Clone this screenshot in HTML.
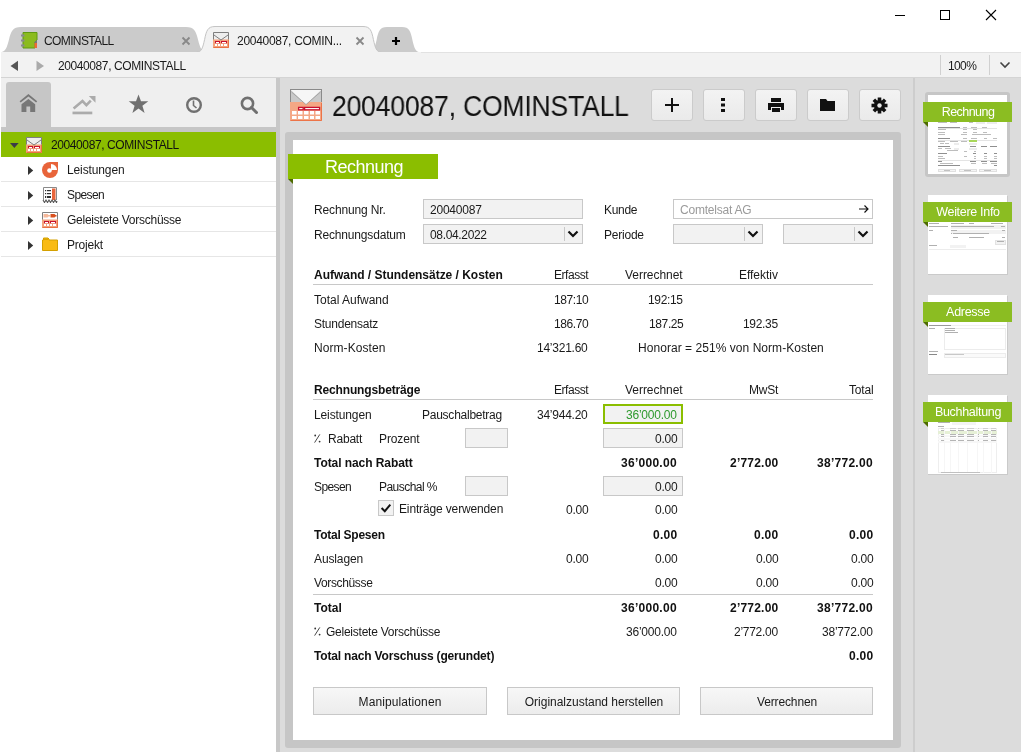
<!DOCTYPE html>
<html><head><meta charset="utf-8"><style>
html,body{margin:0;padding:0;}
body{width:1022px;height:753px;position:relative;overflow:hidden;background:#fff;font-family:"Liberation Sans",sans-serif;}
.t{position:absolute;white-space:nowrap;line-height:1;will-change:transform;}
.r{position:absolute;}
</style></head><body>
<div class="r" style="left:895px;top:15px;width:10px;height:1px;background:#000;"></div>
<div class="r" style="left:940px;top:10px;width:10px;height:10px;background:transparent;border:1px solid #000;box-sizing:border-box;"></div>
<svg class="r" style="left:985px;top:9px;" width="12" height="12" viewBox="0 0 12 12"><path d="M1 1 L11 11 M11 1 L1 11" stroke="#000" stroke-width="1.1" fill="none"/></svg>
<svg class="r" style="left:0px;top:0px;" width="440" height="56" viewBox="0 0 440 56"><path d="M-1 52.5 C5.6 52.5 6.9 47.5 8.9 40 C11.1 31 12.6 27 21 27 L186 27 C194.4 27 195.9 31 198.1 40 C200.1 47.5 201.4 52.5 208 52.5 Z" fill="#cbcbcb"/><path d="M368 52.5 C373.7 52.5 374.8 47.5 376.6 40 C378.4 31 379.8 27 387 27 L402 27 C409.2 27 410.6 31 412.4 40 C414.2 47.5 415.3 52.5 421 52.5 Z" fill="#cbcbcb"/><path d="M196 52.5 C201.7 52.5 202.8 47.5 204.6 39.5 C206.4 30.5 207.8 26.5 215 26.5 L363 26.5 C370.2 26.5 371.6 30.5 373.4 39.5 C375.2 47.5 376.3 52.5 382 52.5 Z" fill="#f2f2f2"/><path d="M196 52.5 C201.7 52.5 202.8 47.5 204.6 39.5 C206.4 30.5 207.8 26.5 215 26.5 L363 26.5 C370.2 26.5 371.6 30.5 373.4 39.5 C375.2 47.5 376.3 52.5 382 52.5" fill="none" stroke="#c4c4c4" stroke-width="1"/></svg>
<div class="r" style="left:0px;top:52px;width:1022px;height:25px;background:#f2f2f2;"></div>
<div class="r" style="left:0px;top:77px;width:1022px;height:1px;background:#d4d4d4;"></div>
<div class="r" style="left:421px;top:52px;width:600px;height:1px;background:#e2e2e2;"></div>
<div class="r" style="left:1021px;top:52px;width:1px;height:26px;background:#fff;"></div>
<div class="r" style="left:0px;top:52px;width:1px;height:26px;background:#fff;"></div>
<svg class="r" style="left:213px;top:32px;" width="16" height="16" viewBox="0 0 16 16"><rect x="0" y="7" width="16" height="9" fill="#f3a27c"/><path d="M0.5 15.5 H15.5 V7.5" stroke="#ea7042" stroke-width="1" fill="none"/><path d="M0.5 7.5 V0.5 H15.5 V7.5" stroke="#7f7f7f" stroke-width="1" fill="#eeeeee"/><path d="M1 3 L8 8 L15 3" stroke="#7f7f7f" stroke-width="1" fill="none"/><rect x="2" y="9" width="5" height="2.2" fill="#c8102e"/><rect x="3" y="10" width="3" height="1.2" fill="#fff"/><rect x="8" y="9" width="6" height="2.2" fill="#c8102e"/><rect x="9" y="10" width="4" height="1.2" fill="#fff"/><g fill="#fff"><rect x="2" y="12" width="2" height="2"/><rect x="5" y="12" width="2" height="2"/><rect x="8" y="12" width="2" height="2"/><rect x="11" y="12" width="3" height="2"/></g></svg>
<svg class="r" style="left:20px;top:31px;" width="19" height="18" viewBox="0 0 19 18"><path d="M3 1.5 H17 V9 L15 11 V17 H3 Z" fill="#8bbb1e" stroke="#5f9a10" stroke-width="1"/><path d="M14.5 11 L17 9 V12 H14.5 Z" fill="#777"/><rect x="14.5" y="12" width="2.5" height="5" fill="#ee6a36"/><g fill="#8a8a90"><rect x="1" y="3.5" width="3.5" height="2"/><rect x="1" y="8.5" width="3.5" height="2"/><rect x="1" y="13.5" width="3.5" height="2"/></g></svg>
<div class="t" style="top:35px;font-size:12px;font-weight:normal;color:#1a1a1a;letter-spacing:-0.621px;left:44px;">COMINSTALL</div>
<div class="t" style="top:35px;font-size:12px;font-weight:normal;color:#1a1a1a;letter-spacing:-0.292px;left:237px;">20040087, COMIN...</div>
<svg class="r" style="left:181px;top:36px;" width="10" height="10" viewBox="0 0 10 10"><path d="M1.5 1.5 L8.5 8.5 M8.5 1.5 L1.5 8.5" stroke="#888" stroke-width="1.8" fill="none"/></svg>
<svg class="r" style="left:355px;top:36px;" width="10" height="10" viewBox="0 0 10 10"><path d="M1.5 1.5 L8.5 8.5 M8.5 1.5 L1.5 8.5" stroke="#888" stroke-width="1.8" fill="none"/></svg>
<svg class="r" style="left:391px;top:36px;" width="10" height="10" viewBox="0 0 10 10"><path d="M5 1 V9 M1 5 H9" stroke="#000" stroke-width="2.2" fill="none"/></svg>
<svg class="r" style="left:9px;top:60px;" width="11" height="12" viewBox="0 0 11 12"><path d="M9 0.8 L9 11 L1.5 5.9 Z" fill="#555"/></svg>
<svg class="r" style="left:35px;top:60px;" width="11" height="12" viewBox="0 0 11 12"><path d="M1.5 0.8 L1.5 11 L9 5.9 Z" fill="#aaa"/></svg>
<div class="t" style="top:60px;font-size:12px;font-weight:normal;color:#1a1a1a;letter-spacing:-0.408px;left:58px;">20040087, COMINSTALL</div>
<div class="r" style="left:940px;top:55px;width:1px;height:20px;background:#d0d0d0;"></div>
<div class="r" style="left:989px;top:55px;width:1px;height:20px;background:#d0d0d0;"></div>
<div class="t" style="top:60px;font-size:12px;font-weight:normal;color:#1a1a1a;letter-spacing:-0.63px;left:948px;">100%</div>
<svg class="r" style="left:999px;top:61px;" width="12" height="8" viewBox="0 0 12 8"><path d="M1.5 1.5 L6 6 L10.5 1.5" stroke="#444" stroke-width="1.6" fill="none"/></svg>
<div class="r" style="left:1px;top:78px;width:275px;height:49px;background:#efefef;"></div>
<div class="r" style="left:6px;top:82px;width:45px;height:45px;background:#c6c6c6;border-radius:3px 3px 0 0;"></div>
<div class="r" style="left:1px;top:127px;width:275px;height:5px;background:#c6c6c6;"></div>
<svg class="r" style="left:16px;top:90px;" width="26" height="26" viewBox="0 0 26 26"><path d="M3.6 11.2 L12.4 4.1 L21.2 11.2 L20.1 12.6 L12.4 6.4 L4.7 12.6 Z" fill="#777"/><path d="M5.5 14.2 L12.4 8.9 L19.2 14.2 V22.1 H14.2 V16.6 H10.4 V22.1 H5.5 Z" fill="#777"/></svg>
<svg class="r" style="left:68px;top:90px;" width="30" height="28" viewBox="0 0 30 28"><path d="M5.6 18.6 L14.5 11.1 L18.4 15.1 L22.8 10.6" stroke="#ababab" stroke-width="2.6" fill="none"/><path d="M20.8 6.1 H27.5 V12.8 Z" fill="#ababab"/><rect x="4.5" y="21.6" width="19.8" height="2.7" fill="#ababab"/></svg>
<svg class="r" style="left:128px;top:94px;" width="21" height="20" viewBox="0 0 21 20"><path d="M10.5 0.5 L13 7.3 L20.3 7.3 L14.4 11.7 L16.6 19 L10.5 14.5 L4.4 19 L6.6 11.7 L0.7 7.3 L8 7.3 Z" fill="#707070"/></svg>
<svg class="r" style="left:185px;top:96px;" width="18" height="18" viewBox="0 0 18 18"><circle cx="9" cy="9" r="6.8" stroke="#707070" stroke-width="2.4" fill="none"/><path d="M8.5 4.5 V9.5 L11.5 12" stroke="#707070" stroke-width="1.6" fill="none"/></svg>
<svg class="r" style="left:240px;top:96px;" width="19" height="19" viewBox="0 0 19 19"><circle cx="7.5" cy="7.5" r="5.6" stroke="#707070" stroke-width="2.6" fill="none"/><path d="M11.5 11.5 L16.5 16.5" stroke="#707070" stroke-width="3" stroke-linecap="round" fill="none"/></svg>
<div class="r" style="left:1px;top:132px;width:275px;height:25px;background:#8bbe00;"></div>
<svg class="r" style="left:10px;top:143px;" width="9" height="6" viewBox="0 0 9 6"><path d="M0 0 H8.7 L4.35 5 Z" fill="#3c3c46"/></svg>
<svg class="r" style="left:26px;top:137px;" width="16" height="16" viewBox="0 0 16 16"><rect x="0" y="7" width="16" height="9" fill="#f3a27c"/><path d="M0.5 15.5 H15.5 V7.5" stroke="#ea7042" stroke-width="1" fill="none"/><path d="M0.5 7.5 V0.5 H15.5 V7.5" stroke="#7f7f7f" stroke-width="1" fill="#eeeeee"/><path d="M1 3 L8 8 L15 3" stroke="#7f7f7f" stroke-width="1" fill="none"/><rect x="2" y="9" width="5" height="2.2" fill="#c8102e"/><rect x="3" y="10" width="3" height="1.2" fill="#fff"/><rect x="8" y="9" width="6" height="2.2" fill="#c8102e"/><rect x="9" y="10" width="4" height="1.2" fill="#fff"/><g fill="#fff"><rect x="2" y="12" width="2" height="2"/><rect x="5" y="12" width="2" height="2"/><rect x="8" y="12" width="2" height="2"/><rect x="11" y="12" width="3" height="2"/></g></svg>
<div class="t" style="top:139px;font-size:12px;font-weight:normal;color:#111;letter-spacing:-0.4px;left:51px;">20040087, COMINSTALL</div>
<svg class="r" style="left:28px;top:166px;" width="6" height="10" viewBox="0 0 6 10"><path d="M0 0 V9 L5.2 4.5 Z" fill="#333"/></svg>
<div class="r" style="left:1px;top:181px;width:275px;height:1px;background:#e6e6e6;"></div>
<div class="t" style="top:164px;font-size:12px;font-weight:normal;color:#1a1a1a;letter-spacing:-0.124px;left:67px;">Leistungen</div>
<svg class="r" style="left:28px;top:191px;" width="6" height="10" viewBox="0 0 6 10"><path d="M0 0 V9 L5.2 4.5 Z" fill="#333"/></svg>
<div class="r" style="left:1px;top:206px;width:275px;height:1px;background:#e6e6e6;"></div>
<div class="t" style="top:189px;font-size:12px;font-weight:normal;color:#1a1a1a;letter-spacing:-0.6px;left:67px;">Spesen</div>
<svg class="r" style="left:28px;top:216px;" width="6" height="10" viewBox="0 0 6 10"><path d="M0 0 V9 L5.2 4.5 Z" fill="#333"/></svg>
<div class="r" style="left:1px;top:231px;width:275px;height:1px;background:#e6e6e6;"></div>
<div class="t" style="top:214px;font-size:12px;font-weight:normal;color:#1a1a1a;letter-spacing:-0.245px;left:67px;">Geleistete Vorschüsse</div>
<svg class="r" style="left:28px;top:241px;" width="6" height="10" viewBox="0 0 6 10"><path d="M0 0 V9 L5.2 4.5 Z" fill="#333"/></svg>
<div class="r" style="left:1px;top:256px;width:275px;height:1px;background:#e6e6e6;"></div>
<div class="t" style="top:239px;font-size:12px;font-weight:normal;color:#1a1a1a;letter-spacing:-0.2px;left:67px;">Projekt</div>
<svg class="r" style="left:42px;top:162px;" width="16" height="16" viewBox="0 0 16 16"><path d="M8 0 H16 V8 A8 8 0 1 1 8 0 Z" fill="#e8643a"/><path d="M9 8 V2 A6 6 0 0 1 15 8 Z" fill="#fff"/><circle cx="7.5" cy="8.5" r="2.3" fill="#fff"/></svg>
<svg class="r" style="left:42px;top:187px;" width="16" height="16" viewBox="0 0 16 16"><path d="M1.5 0.5 H14.5 V13" stroke="#8a8a8a" fill="#fff"/><path d="M1.5 0.5 V13" stroke="#8a8a8a"/><rect x="2" y="1" width="12" height="12" fill="#fff"/><rect x="10" y="1.5" width="3.5" height="11.5" fill="#e8643a"/><g fill="#333"><rect x="3" y="3" width="1.2" height="1.2"/><rect x="5" y="3" width="4" height="1.2"/><rect x="3" y="6" width="1.2" height="1.2"/><rect x="5" y="6" width="4" height="1.2"/><rect x="3" y="9" width="1.2" height="2"/><rect x="5" y="9" width="4" height="2"/></g><path d="M1 13 L2.5 15.5 L4 13 L5.5 15.5 L7 13 L8.5 15.5 L10 13 L11.5 15.5 L13 13 L14.5 15.5 L15 14" stroke="#555" stroke-width="1.1" fill="none"/></svg>
<svg class="r" style="left:42px;top:212px;" width="16" height="16" viewBox="0 0 16 16"><rect x="0" y="7" width="16" height="9" fill="#f3a27c"/><path d="M0.5 15.5 H15.5 V7.5" stroke="#ea7042" fill="none"/><path d="M0.5 7.5 V0.5 H15.5 V7.5" stroke="#7f7f7f" fill="#fff"/><path d="M1.5 2 H5.5 L6.5 3 H8 V4.5 H6.5 L5.5 5.5 H1.5 Z" fill="#f5b89a"/><path d="M8.5 2 H12.5 L13.5 3 H14.5 V4.5 H13.5 L12.5 5.5 H8.5 Z" fill="#d9501e"/><rect x="2" y="9" width="5" height="2.2" fill="#c8102e"/><rect x="3" y="10" width="3" height="1.2" fill="#fff"/><rect x="8" y="9" width="6" height="2.2" fill="#c8102e"/><rect x="9" y="10" width="4" height="1.2" fill="#fff"/><g fill="#fff"><rect x="2" y="12" width="2" height="2"/><rect x="5" y="12" width="2" height="2"/><rect x="8" y="12" width="2" height="2"/><rect x="11" y="12" width="3" height="2"/></g></svg>
<svg class="r" style="left:42px;top:237px;" width="16" height="16" viewBox="0 0 16 16"><path d="M1.5 1 H6 L7 2 V3 H15.5 V13.5 H0.5 V3 H1.5 Z" fill="#f9bb14" stroke="#d4a000" stroke-width="1"/><rect x="2" y="1.5" width="4" height="1.5" fill="#dca600"/></svg>
<div class="r" style="left:276px;top:78px;width:4px;height:675px;background:#c8c8c8;"></div>
<div class="r" style="left:280px;top:78px;width:633px;height:675px;background:#dcdcdc;"></div>
<div class="r" style="left:913px;top:78px;width:2px;height:675px;background:#cdcdcd;"></div>
<div class="r" style="left:915px;top:78px;width:106px;height:675px;background:#dcdcdc;"></div>
<div class="r" style="left:1021px;top:78px;width:1px;height:675px;background:#fff;"></div>
<svg class="r" style="left:290px;top:89px;" width="32" height="32" viewBox="0 0 32 32"><rect x="0" y="13" width="32" height="19" fill="#f4a785"/><path d="M0.5 31.5 H31.5 V13" stroke="#ec7448" stroke-width="1" fill="none"/><rect x="0.5" y="0.5" width="31" height="13" fill="#c9c9c9" stroke="#8a8a8a" stroke-width="1"/><rect x="0" y="13" width="32" height="1" fill="#f4a785"/><path d="M1 1 H31 L16 15.5 Z" fill="#f6f6f6"/><path d="M1.5 3 L16 15.5 L30.5 3" stroke="#9a9a9a" stroke-width="0.8" fill="none"/><path d="M1 1 H31 L16 14.5 Z" fill="#f6f6f6"/><rect x="8.6" y="18.4" width="4.6" height="2.4" fill="#fff" stroke="#c8102e" stroke-width="1.3"/><rect x="14.6" y="18.4" width="15" height="2.4" fill="#fff" stroke="#c8102e" stroke-width="1.3"/><g fill="#fff"><rect x="2" y="22" width="4.6" height="3.5"/><rect x="8" y="22" width="4.5" height="3.5"/><rect x="14" y="22" width="4.5" height="3.5"/><rect x="20" y="22" width="4" height="3.5"/><rect x="25.5" y="22" width="4.5" height="3.5"/><rect x="2" y="27" width="4.6" height="3"/><rect x="8" y="27" width="4.5" height="3"/><rect x="14" y="27" width="4.5" height="3"/><rect x="20" y="27" width="4" height="3"/><rect x="25.5" y="27" width="4.5" height="3"/></g></svg>
<div class="t" style="top:92px;font-size:29px;font-weight:normal;color:#111;letter-spacing:-0.2px;left:332px;transform:scaleX(0.915);transform-origin:0 0;">20040087, COMINSTALL</div>
<div class="r" style="left:651px;top:89px;width:42px;height:32px;background:linear-gradient(#f3f3f3,#eaeaea);border:1px solid #cbcbcb;box-sizing:border-box;border-radius:3px;"></div>
<div class="r" style="left:703px;top:89px;width:42px;height:32px;background:linear-gradient(#f3f3f3,#eaeaea);border:1px solid #cbcbcb;box-sizing:border-box;border-radius:3px;"></div>
<div class="r" style="left:755px;top:89px;width:42px;height:32px;background:linear-gradient(#f3f3f3,#eaeaea);border:1px solid #cbcbcb;box-sizing:border-box;border-radius:3px;"></div>
<div class="r" style="left:807px;top:89px;width:42px;height:32px;background:linear-gradient(#f3f3f3,#eaeaea);border:1px solid #cbcbcb;box-sizing:border-box;border-radius:3px;"></div>
<div class="r" style="left:859px;top:89px;width:42px;height:32px;background:linear-gradient(#f3f3f3,#eaeaea);border:1px solid #cbcbcb;box-sizing:border-box;border-radius:3px;"></div>
<svg class="r" style="left:664px;top:97px;" width="16" height="16" viewBox="0 0 16 16"><path d="M8 1 V15 M1 8 H15" stroke="#111" stroke-width="2" fill="none"/></svg>
<svg class="r" style="left:719px;top:97px;" width="8" height="16" viewBox="0 0 8 16"><rect x="2" y="1" width="4" height="3" fill="#111"/><rect x="2" y="6.5" width="4" height="3" fill="#111"/><rect x="2" y="12" width="4" height="3" fill="#111"/></svg>
<svg class="r" style="left:767px;top:97px;" width="18" height="16" viewBox="0 0 18 16"><rect x="4" y="1" width="10" height="4" fill="#111"/><path d="M1 6 H17 V13 H14 V10 H4 V13 H1 Z" fill="#111"/><rect x="5" y="11" width="8" height="4" fill="#111"/></svg>
<svg class="r" style="left:819px;top:97px;" width="17" height="15" viewBox="0 0 17 15"><path d="M1 2 H7 L8.5 4 H16 V14 H1 Z" fill="#111"/></svg>
<svg class="r" style="left:871px;top:97px;" width="17" height="17" viewBox="0 0 17 17"><g transform="translate(8.5 8.5)"><circle r="5.5" fill="#111"/><g fill="#111"><rect x="-1.8" y="-8" width="3.6" height="16"/><rect x="-1.8" y="-8" width="3.6" height="16" transform="rotate(45)"/><rect x="-1.8" y="-8" width="3.6" height="16" transform="rotate(90)"/><rect x="-1.8" y="-8" width="3.6" height="16" transform="rotate(135)"/></g><circle r="2.2" fill="#e8e8e8"/></g></svg>
<div class="r" style="left:285px;top:132px;width:616px;height:616px;background:#c6c6c6;border-radius:3px;"></div>
<div class="r" style="left:293px;top:140px;width:600px;height:600px;background:#fff;"></div>
<div class="r" style="left:288px;top:154px;width:150px;height:25px;background:#8bbe00;"></div>
<svg class="r" style="left:288px;top:179px;" width="6" height="6" viewBox="0 0 6 6"><path d="M0 0 H5 V5 Z" fill="#4d6b00"/></svg>
<div class="t" style="top:158px;font-size:18px;font-weight:normal;color:#fff;letter-spacing:-0.5px;left:324.5px;">Rechnung</div>
<div class="t" style="top:204px;font-size:12px;font-weight:normal;color:#1a1a1a;letter-spacing:-0.143px;left:313.5px;">Rechnung Nr.</div>
<div class="r" style="left:423px;top:199px;width:160px;height:20px;background:#f2f2f2;border:1px solid #c8c8c8;box-sizing:border-box;"></div>
<div class="t" style="top:204px;font-size:12px;font-weight:normal;color:#1a1a1a;letter-spacing:-0.227px;left:429.5px;">20040087</div>
<div class="t" style="top:229px;font-size:12px;font-weight:normal;color:#1a1a1a;letter-spacing:-0.174px;left:313.5px;">Rechnungsdatum</div>
<div class="r" style="left:423px;top:224px;width:160px;height:20px;background:#f2f2f2;border:1px solid #c8c8c8;box-sizing:border-box;"></div>
<div class="r" style="left:564px;top:227px;width:1px;height:14px;background:#c8c8c8;"></div>
<div class="t" style="top:229px;font-size:12px;font-weight:normal;color:#1a1a1a;letter-spacing:-0.34px;left:429.5px;">08.04.2022</div>
<svg class="r" style="left:567px;top:230px;" width="12" height="8" viewBox="0 0 12 8"><path d="M1.5 1.5 L6 6 L10.5 1.5" stroke="#111" stroke-width="2.2" fill="none"/></svg>
<div class="t" style="top:204px;font-size:12px;font-weight:normal;color:#1a1a1a;letter-spacing:-0.325px;left:603.5px;">Kunde</div>
<div class="r" style="left:673px;top:199px;width:200px;height:20px;background:#fff;border:1px solid #c8c8c8;box-sizing:border-box;"></div>
<div class="t" style="top:204px;font-size:12px;font-weight:normal;color:#9a9a9a;letter-spacing:-0.226px;left:679.6px;">Comtelsat AG</div>
<svg class="r" style="left:858px;top:204px;" width="12" height="10" viewBox="0 0 12 10"><path d="M1 5 H10 M6.5 1.5 L10 5 L6.5 8.5" stroke="#111" stroke-width="1.15" fill="none"/></svg>
<div class="t" style="top:229px;font-size:12px;font-weight:normal;color:#1a1a1a;letter-spacing:-0.227px;left:603.5px;">Periode</div>
<div class="r" style="left:673px;top:224px;width:90px;height:20px;background:#f2f2f2;border:1px solid #c8c8c8;box-sizing:border-box;"></div>
<div class="r" style="left:744px;top:227px;width:1px;height:14px;background:#c8c8c8;"></div>
<svg class="r" style="left:747px;top:230px;" width="12" height="8" viewBox="0 0 12 8"><path d="M1.5 1.5 L6 6 L10.5 1.5" stroke="#111" stroke-width="2.2" fill="none"/></svg>
<div class="r" style="left:783px;top:224px;width:90px;height:20px;background:#f2f2f2;border:1px solid #c8c8c8;box-sizing:border-box;"></div>
<div class="r" style="left:854px;top:227px;width:1px;height:14px;background:#c8c8c8;"></div>
<svg class="r" style="left:857px;top:230px;" width="12" height="8" viewBox="0 0 12 8"><path d="M1.5 1.5 L6 6 L10.5 1.5" stroke="#111" stroke-width="2.2" fill="none"/></svg>
<div class="t" style="top:269px;font-size:12px;font-weight:bold;color:#111;letter-spacing:-0.018px;left:313.5px;">Aufwand / Stundensätze / Kosten</div>
<div class="t" style="top:269px;font-size:12px;font-weight:normal;color:#1a1a1a;letter-spacing:-0.457px;right:434px;">Erfasst</div>
<div class="t" style="top:269px;font-size:12px;font-weight:normal;color:#1a1a1a;letter-spacing:-0.037px;right:339px;">Verrechnet</div>
<div class="t" style="top:269px;font-size:12px;font-weight:normal;color:#1a1a1a;letter-spacing:-0.033px;right:244px;">Effektiv</div>
<div class="r" style="left:313px;top:284px;width:560px;height:1px;background:#c8c8c8;"></div>
<div class="t" style="top:294px;font-size:12px;font-weight:normal;color:#1a1a1a;letter-spacing:-0.007px;left:313.5px;">Total Aufwand</div>
<div class="t" style="top:294px;font-size:12px;font-weight:normal;color:#1a1a1a;letter-spacing:-0.421px;right:434px;">187:10</div>
<div class="t" style="top:294px;font-size:12px;font-weight:normal;color:#1a1a1a;letter-spacing:-0.361px;right:339px;">192:15</div>
<div class="t" style="top:318px;font-size:12px;font-weight:normal;color:#1a1a1a;letter-spacing:-0.241px;left:313.5px;">Stundensatz</div>
<div class="t" style="top:318px;font-size:12px;font-weight:normal;color:#1a1a1a;letter-spacing:-0.421px;right:434px;">186.70</div>
<div class="t" style="top:318px;font-size:12px;font-weight:normal;color:#1a1a1a;letter-spacing:-0.381px;right:339px;">187.25</div>
<div class="t" style="top:318px;font-size:12px;font-weight:normal;color:#1a1a1a;letter-spacing:-0.321px;right:244px;">192.35</div>
<div class="t" style="top:342px;font-size:12px;font-weight:normal;color:#1a1a1a;letter-spacing:0.071px;left:313.5px;">Norm-Kosten</div>
<div class="t" style="top:342px;font-size:12px;font-weight:normal;color:#1a1a1a;letter-spacing:-0.24px;right:434px;">14’321.60</div>
<div class="t" style="top:342px;font-size:12px;font-weight:normal;color:#1a1a1a;letter-spacing:0.047px;left:638.4px;">Honorar = 251% von Norm-Kosten</div>
<div class="t" style="top:384px;font-size:12px;font-weight:bold;color:#111;letter-spacing:-0.15px;left:313.5px;">Rechnungsbeträge</div>
<div class="t" style="top:384px;font-size:12px;font-weight:normal;color:#1a1a1a;letter-spacing:-0.457px;right:434px;">Erfasst</div>
<div class="t" style="top:384px;font-size:12px;font-weight:normal;color:#1a1a1a;letter-spacing:-0.037px;right:339px;">Verrechnet</div>
<div class="t" style="top:384px;font-size:12px;font-weight:normal;color:#1a1a1a;letter-spacing:-0.2px;right:244px;">MwSt</div>
<div class="t" style="top:384px;font-size:12px;font-weight:normal;color:#1a1a1a;letter-spacing:-0.187px;right:149px;">Total</div>
<div class="r" style="left:313px;top:399px;width:560px;height:1px;background:#c8c8c8;"></div>
<div class="t" style="top:409px;font-size:12px;font-weight:normal;color:#1a1a1a;letter-spacing:-0.124px;left:313.5px;">Leistungen</div>
<div class="t" style="top:409px;font-size:12px;font-weight:normal;color:#1a1a1a;letter-spacing:-0.245px;left:421.5px;">Pauschalbetrag</div>
<div class="t" style="top:409px;font-size:12px;font-weight:normal;color:#1a1a1a;letter-spacing:-0.24px;right:434px;">34’944.20</div>
<div class="r" style="left:603px;top:404px;width:80px;height:20px;background:#f2f2f2;border:2px solid #8bbe00;box-sizing:border-box;"></div>
<div class="t" style="top:409px;font-size:12px;font-weight:normal;color:#2e9a2e;letter-spacing:-0.227px;right:345px;">36’000.00</div>
<svg class="r" style="left:314px;top:434px;" width="7" height="9" viewBox="0 0 7 9"><circle cx="1.2" cy="1.5" r="0.9" fill="#333"/><circle cx="5.6" cy="7.6" r="0.9" fill="#333"/><path d="M0.6 8.6 L5.8 0.4" stroke="#333" stroke-width="0.9"/></svg>
<div class="t" style="top:433px;font-size:12px;font-weight:normal;color:#1a1a1a;letter-spacing:-0.211px;left:327.6px;">Rabatt</div>
<div class="t" style="top:433px;font-size:12px;font-weight:normal;color:#1a1a1a;letter-spacing:-0.109px;left:378.7px;">Prozent</div>
<div class="r" style="left:465px;top:428px;width:43px;height:20px;background:#f2f2f2;border:1px solid #c8c8c8;box-sizing:border-box;"></div>
<div class="r" style="left:603px;top:428px;width:80px;height:20px;background:#f2f2f2;border:1px solid #c8c8c8;box-sizing:border-box;"></div>
<div class="t" style="top:433px;font-size:12px;font-weight:normal;color:#1a1a1a;letter-spacing:-0.218px;right:345px;">0.00</div>
<div class="t" style="top:457px;font-size:12px;font-weight:bold;color:#111;letter-spacing:-0.062px;left:313.5px;">Total nach Rabatt</div>
<div class="t" style="top:457px;font-size:12px;font-weight:bold;color:#111;letter-spacing:0.277px;right:345px;">36’000.00</div>
<div class="t" style="top:457px;font-size:12px;font-weight:bold;color:#111;letter-spacing:0.213px;right:244px;">2’772.00</div>
<div class="t" style="top:457px;font-size:12px;font-weight:bold;color:#111;letter-spacing:0.277px;right:149px;">38’772.00</div>
<div class="t" style="top:481px;font-size:12px;font-weight:normal;color:#1a1a1a;letter-spacing:-0.6px;left:313.5px;">Spesen</div>
<div class="t" style="top:481px;font-size:12px;font-weight:normal;color:#1a1a1a;letter-spacing:-0.541px;left:378.7px;">Pauschal %</div>
<div class="r" style="left:465px;top:476px;width:43px;height:20px;background:#f2f2f2;border:1px solid #c8c8c8;box-sizing:border-box;"></div>
<div class="r" style="left:603px;top:476px;width:80px;height:20px;background:#f2f2f2;border:1px solid #c8c8c8;box-sizing:border-box;"></div>
<div class="t" style="top:481px;font-size:12px;font-weight:normal;color:#1a1a1a;letter-spacing:-0.218px;right:345px;">0.00</div>
<div class="r" style="left:378px;top:500px;width:16px;height:16px;background:#f2f2f2;border:1px solid #c8c8c8;box-sizing:border-box;"></div>
<svg class="r" style="left:379px;top:501px;" width="14" height="14" viewBox="0 0 14 14"><path d="M2.6 7 L5.8 10.2 L11.3 3.6" stroke="#111" stroke-width="2" fill="none"/></svg>
<div class="t" style="top:503px;font-size:12px;font-weight:normal;color:#1a1a1a;letter-spacing:-0.143px;left:399px;">Einträge verwenden</div>
<div class="t" style="top:504px;font-size:12px;font-weight:normal;color:#1a1a1a;letter-spacing:-0.218px;right:434px;">0.00</div>
<div class="t" style="top:504px;font-size:12px;font-weight:normal;color:#1a1a1a;letter-spacing:-0.218px;right:345px;">0.00</div>
<div class="t" style="top:529px;font-size:12px;font-weight:bold;color:#111;letter-spacing:-0.254px;left:313.5px;">Total Spesen</div>
<div class="t" style="top:529px;font-size:12px;font-weight:bold;color:#111;letter-spacing:0.248px;right:345px;">0.00</div>
<div class="t" style="top:529px;font-size:12px;font-weight:bold;color:#111;letter-spacing:0.248px;right:244px;">0.00</div>
<div class="t" style="top:529px;font-size:12px;font-weight:bold;color:#111;letter-spacing:0.248px;right:149px;">0.00</div>
<div class="t" style="top:553px;font-size:12px;font-weight:normal;color:#1a1a1a;letter-spacing:-0.12px;left:313.5px;">Auslagen</div>
<div class="t" style="top:553px;font-size:12px;font-weight:normal;color:#1a1a1a;letter-spacing:-0.218px;right:434px;">0.00</div>
<div class="t" style="top:553px;font-size:12px;font-weight:normal;color:#1a1a1a;letter-spacing:-0.218px;right:345px;">0.00</div>
<div class="t" style="top:553px;font-size:12px;font-weight:normal;color:#1a1a1a;letter-spacing:-0.218px;right:244px;">0.00</div>
<div class="t" style="top:553px;font-size:12px;font-weight:normal;color:#1a1a1a;letter-spacing:-0.218px;right:149px;">0.00</div>
<div class="t" style="top:577px;font-size:12px;font-weight:normal;color:#1a1a1a;letter-spacing:-0.359px;left:313.5px;">Vorschüsse</div>
<div class="t" style="top:577px;font-size:12px;font-weight:normal;color:#1a1a1a;letter-spacing:-0.218px;right:345px;">0.00</div>
<div class="t" style="top:577px;font-size:12px;font-weight:normal;color:#1a1a1a;letter-spacing:-0.218px;right:244px;">0.00</div>
<div class="t" style="top:577px;font-size:12px;font-weight:normal;color:#1a1a1a;letter-spacing:-0.218px;right:149px;">0.00</div>
<div class="r" style="left:313px;top:594px;width:560px;height:1px;background:#c8c8c8;"></div>
<div class="t" style="top:602px;font-size:12px;font-weight:bold;color:#111;letter-spacing:0.007px;left:313.5px;">Total</div>
<div class="t" style="top:602px;font-size:12px;font-weight:bold;color:#111;letter-spacing:0.277px;right:345px;">36’000.00</div>
<div class="t" style="top:602px;font-size:12px;font-weight:bold;color:#111;letter-spacing:0.213px;right:244px;">2’772.00</div>
<div class="t" style="top:602px;font-size:12px;font-weight:bold;color:#111;letter-spacing:0.277px;right:149px;">38’772.00</div>
<svg class="r" style="left:314px;top:627px;" width="7" height="9" viewBox="0 0 7 9"><circle cx="1.2" cy="1.5" r="0.9" fill="#333"/><circle cx="5.6" cy="7.6" r="0.9" fill="#333"/><path d="M0.6 8.6 L5.8 0.4" stroke="#333" stroke-width="0.9"/></svg>
<div class="t" style="top:626px;font-size:12px;font-weight:normal;color:#1a1a1a;letter-spacing:-0.245px;left:326px;">Geleistete Vorschüsse</div>
<div class="t" style="top:626px;font-size:12px;font-weight:normal;color:#1a1a1a;letter-spacing:-0.227px;right:345px;">36’000.00</div>
<div class="t" style="top:626px;font-size:12px;font-weight:normal;color:#1a1a1a;letter-spacing:-0.278px;right:244px;">2’772.00</div>
<div class="t" style="top:626px;font-size:12px;font-weight:normal;color:#1a1a1a;letter-spacing:-0.227px;right:149px;">38’772.00</div>
<div class="t" style="top:650px;font-size:12px;font-weight:bold;color:#111;letter-spacing:-0.173px;left:313.5px;">Total nach Vorschuss (gerundet)</div>
<div class="t" style="top:650px;font-size:12px;font-weight:bold;color:#111;letter-spacing:0.248px;right:149px;">0.00</div>
<div class="r" style="left:313px;top:687px;width:174px;height:28px;background:linear-gradient(#f7f7f7,#ececec);border:1px solid #c8c8c8;box-sizing:border-box;"></div>
<div class="t" style="top:696px;font-size:12px;font-weight:normal;color:#1a1a1a;letter-spacing:0.108px;left:100.0px;width:600px;text-align:center;">Manipulationen</div>
<div class="r" style="left:507px;top:687px;width:173px;height:28px;background:linear-gradient(#f7f7f7,#ececec);border:1px solid #c8c8c8;box-sizing:border-box;"></div>
<div class="t" style="top:696px;font-size:12px;font-weight:normal;color:#1a1a1a;letter-spacing:-0.01px;left:293.5px;width:600px;text-align:center;">Originalzustand herstellen</div>
<div class="r" style="left:700px;top:687px;width:173px;height:28px;background:linear-gradient(#f7f7f7,#ececec);border:1px solid #c8c8c8;box-sizing:border-box;"></div>
<div class="t" style="top:696px;font-size:12px;font-weight:normal;color:#1a1a1a;letter-spacing:-0.131px;left:486.5px;width:600px;text-align:center;">Verrechnen</div>
<div class="r" style="left:925px;top:92px;width:85px;height:85px;background:#c6c6c6;border-radius:3px;"></div>
<div class="r" style="left:928px;top:95px;width:79px;height:79px;background:#fff;"></div>
<div class="r" style="left:938px;top:122px;width:9px;height:1px;background:#bdbdbd"></div>
<div class="r" style="left:950px;top:122px;width:7px;height:1px;background:#bdbdbd"></div>
<div class="r" style="left:969px;top:122px;width:4px;height:1px;background:#bdbdbd"></div>
<div class="r" style="left:938px;top:127px;width:22px;height:1px;background:#8f8f8f"></div>
<div class="r" style="left:963px;top:127px;width:4px;height:1px;background:#bdbdbd"></div>
<div class="r" style="left:971px;top:127px;width:6px;height:1px;background:#bdbdbd"></div>
<div class="r" style="left:982px;top:127px;width:5px;height:1px;background:#bdbdbd"></div>
<div class="r" style="left:938px;top:129px;width:8px;height:1px;background:#bdbdbd"></div>
<div class="r" style="left:963px;top:129px;width:4px;height:1px;background:#bdbdbd"></div>
<div class="r" style="left:973px;top:129px;width:4px;height:1px;background:#bdbdbd"></div>
<div class="r" style="left:938px;top:132px;width:7px;height:1px;background:#bdbdbd"></div>
<div class="r" style="left:963px;top:132px;width:4px;height:1px;background:#bdbdbd"></div>
<div class="r" style="left:973px;top:132px;width:4px;height:1px;background:#bdbdbd"></div>
<div class="r" style="left:983px;top:132px;width:4px;height:1px;background:#bdbdbd"></div>
<div class="r" style="left:938px;top:134px;width:7px;height:1px;background:#bdbdbd"></div>
<div class="r" style="left:961px;top:134px;width:6px;height:1px;background:#bdbdbd"></div>
<div class="r" style="left:972px;top:134px;width:19px;height:1px;background:#bdbdbd"></div>
<div class="r" style="left:938px;top:138px;width:12px;height:1px;background:#8f8f8f"></div>
<div class="r" style="left:963px;top:138px;width:4px;height:1px;background:#bdbdbd"></div>
<div class="r" style="left:971px;top:138px;width:6px;height:1px;background:#bdbdbd"></div>
<div class="r" style="left:984px;top:138px;width:3px;height:1px;background:#bdbdbd"></div>
<div class="r" style="left:993px;top:138px;width:4px;height:1px;background:#bdbdbd"></div>
<div class="r" style="left:938px;top:141px;width:7px;height:1px;background:#bdbdbd"></div>
<div class="r" style="left:950px;top:141px;width:8px;height:1px;background:#bdbdbd"></div>
<div class="r" style="left:961px;top:141px;width:6px;height:1px;background:#bdbdbd"></div>
<div class="r" style="left:971px;top:141px;width:5px;height:1px;background:#8cc88c"></div>
<div class="r" style="left:940px;top:143px;width:4px;height:1px;background:#bdbdbd"></div>
<div class="r" style="left:945px;top:143px;width:4px;height:1px;background:#bdbdbd"></div>
<div class="r" style="left:974px;top:143px;width:2px;height:1px;background:#bdbdbd"></div>
<div class="r" style="left:938px;top:146px;width:12px;height:1px;background:#8f8f8f"></div>
<div class="r" style="left:970px;top:146px;width:6px;height:1px;background:#8f8f8f"></div>
<div class="r" style="left:981px;top:146px;width:6px;height:1px;background:#8f8f8f"></div>
<div class="r" style="left:990px;top:146px;width:7px;height:1px;background:#8f8f8f"></div>
<div class="r" style="left:938px;top:148px;width:4px;height:1px;background:#bdbdbd"></div>
<div class="r" style="left:945px;top:148px;width:6px;height:1px;background:#bdbdbd"></div>
<div class="r" style="left:974px;top:148px;width:2px;height:1px;background:#bdbdbd"></div>
<div class="r" style="left:947px;top:150px;width:11px;height:1px;background:#bdbdbd"></div>
<div class="r" style="left:964px;top:151px;width:3px;height:1px;background:#bdbdbd"></div>
<div class="r" style="left:974px;top:151px;width:2px;height:1px;background:#bdbdbd"></div>
<div class="r" style="left:938px;top:153px;width:9px;height:1px;background:#8f8f8f"></div>
<div class="r" style="left:973px;top:153px;width:3px;height:1px;background:#8f8f8f"></div>
<div class="r" style="left:984px;top:153px;width:3px;height:1px;background:#8f8f8f"></div>
<div class="r" style="left:994px;top:153px;width:3px;height:1px;background:#8f8f8f"></div>
<div class="r" style="left:938px;top:156px;width:5px;height:1px;background:#bdbdbd"></div>
<div class="r" style="left:964px;top:156px;width:3px;height:1px;background:#bdbdbd"></div>
<div class="r" style="left:974px;top:156px;width:2px;height:1px;background:#bdbdbd"></div>
<div class="r" style="left:984px;top:156px;width:3px;height:1px;background:#bdbdbd"></div>
<div class="r" style="left:994px;top:156px;width:3px;height:1px;background:#bdbdbd"></div>
<div class="r" style="left:938px;top:158px;width:7px;height:1px;background:#bdbdbd"></div>
<div class="r" style="left:974px;top:158px;width:2px;height:1px;background:#bdbdbd"></div>
<div class="r" style="left:984px;top:158px;width:3px;height:1px;background:#bdbdbd"></div>
<div class="r" style="left:994px;top:158px;width:3px;height:1px;background:#bdbdbd"></div>
<div class="r" style="left:938px;top:161px;width:4px;height:1px;background:#8f8f8f"></div>
<div class="r" style="left:970px;top:161px;width:6px;height:1px;background:#8f8f8f"></div>
<div class="r" style="left:981px;top:161px;width:6px;height:1px;background:#8f8f8f"></div>
<div class="r" style="left:990px;top:161px;width:7px;height:1px;background:#8f8f8f"></div>
<div class="r" style="left:940px;top:163px;width:13px;height:1px;background:#bdbdbd"></div>
<div class="r" style="left:971px;top:163px;width:5px;height:1px;background:#bdbdbd"></div>
<div class="r" style="left:982px;top:163px;width:5px;height:1px;background:#bdbdbd"></div>
<div class="r" style="left:991px;top:163px;width:6px;height:1px;background:#bdbdbd"></div>
<div class="r" style="left:938px;top:165px;width:22px;height:1px;background:#8f8f8f"></div>
<div class="r" style="left:994px;top:165px;width:3px;height:1px;background:#8f8f8f"></div>
<div class="r" style="left:943px;top:170px;width:9px;height:1px;background:#bdbdbd"></div>
<div class="r" style="left:959px;top:170px;width:17px;height:1px;background:#bdbdbd"></div>
<div class="r" style="left:984px;top:170px;width:7px;height:1px;background:#bdbdbd"></div>
<div class="r" style="left:938px;top:128px;width:59px;height:1px;background:#e4e4e4"></div>
<div class="r" style="left:938px;top:140px;width:59px;height:1px;background:#e4e4e4"></div>
<div class="r" style="left:938px;top:160px;width:59px;height:1px;background:#e4e4e4"></div>
<div class="r" style="left:975.7px;top:122.0px;width:9.4px;height:2.0px;border:1px solid #ececec;box-sizing:border-box"></div>
<div class="r" style="left:987.2px;top:122.0px;width:9.4px;height:2.0px;border:1px solid #ececec;box-sizing:border-box"></div>
<div class="r" style="left:954.1px;top:142.8px;width:4.5px;height:2.0px;border:1px solid #ececec;box-sizing:border-box"></div>
<div class="r" style="left:968.5px;top:142.8px;width:8.3px;height:2.0px;border:1px solid #ececec;box-sizing:border-box"></div>
<div class="r" style="left:954.1px;top:147.7px;width:4.5px;height:2.0px;border:1px solid #ececec;box-sizing:border-box"></div>
<div class="r" style="left:968.5px;top:147.7px;width:8.3px;height:2.0px;border:1px solid #ececec;box-sizing:border-box"></div>
<div class="r" style="left:968.5px;top:140.3px;width:8.3px;height:2.0px;border:1px solid #a8d65a;box-sizing:border-box"></div>
<div class="r" style="left:938.2px;top:169.2px;width:18.1px;height:2.9px;border:1px solid #e0e0e0;background:#f6f6f6;box-sizing:border-box"></div>
<div class="r" style="left:944px;top:170px;width:6px;height:1px;background:#c2c2c2"></div>
<div class="r" style="left:958.5px;top:169.2px;width:18.0px;height:2.9px;border:1px solid #e0e0e0;background:#f6f6f6;box-sizing:border-box"></div>
<div class="r" style="left:964px;top:170px;width:7px;height:1px;background:#c2c2c2"></div>
<div class="r" style="left:978.6px;top:169.2px;width:18.0px;height:2.9px;border:1px solid #e0e0e0;background:#f6f6f6;box-sizing:border-box"></div>
<div class="r" style="left:984px;top:170px;width:7px;height:1px;background:#c2c2c2"></div>
<div class="r" style="left:923px;top:102px;width:89px;height:20px;background:#8bbd22;"></div>
<svg class="r" style="left:923px;top:122px;" width="5" height="5" viewBox="0 0 5 5"><path d="M0 0 H5 V5 Z" fill="#4d6b00"/></svg>
<div class="t" style="top:106px;font-size:12.5px;font-weight:normal;color:#fff;letter-spacing:-0.55px;left:667.5px;width:600px;text-align:center;">Rechnung</div>
<div class="r" style="left:928px;top:196px;width:80px;height:79px;background:rgba(0,0,0,0.08);"></div>
<div class="r" style="left:928px;top:195px;width:79px;height:79px;background:#fff;"></div>
<div class="r" style="left:951px;top:225px;width:55px;height:4px;background:#f2f2f2;"></div>
<div class="r" style="left:951px;top:229.5px;width:55px;height:4.0px;background:#f2f2f2;"></div>
<div class="r" style="left:995px;top:240px;width:11px;height:4.5px;background:#f2f2f2;border:1px solid #e2e2e2;box-sizing:border-box;"></div>
<div class="r" style="left:950px;top:245px;width:16px;height:3px;background:#f2f2f2;"></div>
<div class="r" style="left:929px;top:223px;width:10px;height:1px;background:#b0b0b0"></div>
<div class="r" style="left:951px;top:223px;width:13px;height:1px;background:#b0b0b0"></div>
<div class="r" style="left:969px;top:223px;width:5px;height:1px;background:#b0b0b0"></div>
<div class="r" style="left:991px;top:223px;width:12px;height:1px;background:#b0b0b0"></div>
<div class="r" style="left:929px;top:226px;width:19px;height:1px;background:#b0b0b0"></div>
<div class="r" style="left:951px;top:226px;width:43px;height:1px;background:#b0b0b0"></div>
<div class="r" style="left:1001px;top:226px;width:4px;height:1px;background:#b0b0b0"></div>
<div class="r" style="left:929px;top:230px;width:4px;height:1px;background:#b0b0b0"></div>
<div class="r" style="left:951px;top:230px;width:6px;height:1px;background:#b0b0b0"></div>
<div class="r" style="left:1002px;top:230px;width:3px;height:1px;background:#b0b0b0"></div>
<div class="r" style="left:951px;top:233px;width:1px;height:1px;background:#b0b0b0"></div>
<div class="r" style="left:953px;top:233px;width:36px;height:1px;background:#b0b0b0"></div>
<div class="r" style="left:953px;top:237px;width:5px;height:1px;background:#b0b0b0"></div>
<div class="r" style="left:969px;top:237px;width:15px;height:1px;background:#b0b0b0"></div>
<div class="r" style="left:1002px;top:237px;width:3px;height:1px;background:#b0b0b0"></div>
<div class="r" style="left:997px;top:241px;width:7px;height:1px;background:#b0b0b0"></div>
<div class="r" style="left:929px;top:245px;width:8px;height:1px;background:#b0b0b0"></div>
<div class="r" style="left:929px;top:249px;width:77px;height:1px;background:#ececec"></div>
<div class="r" style="left:923px;top:202px;width:89px;height:20px;background:#8bbd22;"></div>
<svg class="r" style="left:923px;top:222px;" width="5" height="5" viewBox="0 0 5 5"><path d="M0 0 H5 V5 Z" fill="#4d6b00"/></svg>
<div class="t" style="top:206px;font-size:12.5px;font-weight:normal;color:#fff;letter-spacing:-0.3px;left:667.5px;width:600px;text-align:center;">Weitere Info</div>
<div class="r" style="left:928px;top:296px;width:80px;height:79px;background:rgba(0,0,0,0.08);"></div>
<div class="r" style="left:928px;top:295px;width:79px;height:79px;background:#fff;"></div>
<div class="r" style="left:929px;top:325px;width:77px;height:1px;background:#f0f0f0"></div>
<div class="r" style="left:929px;top:325px;width:22px;height:1px;background:#999"></div>
<div class="r" style="left:929px;top:328px;width:6px;height:1px;background:#b0b0b0"></div>
<div class="r" style="left:944px;top:327.7px;width:62px;height:22.400000000000034px;background:#fff;border:1px solid #ececec;box-sizing:border-box;"></div>
<div class="r" style="left:945px;top:328px;width:10px;height:1px;background:#b0b0b0"></div>
<div class="r" style="left:945px;top:330px;width:10px;height:1px;background:#b0b0b0"></div>
<div class="r" style="left:945px;top:332px;width:13px;height:1px;background:#b0b0b0"></div>
<div class="r" style="left:929px;top:351px;width:9px;height:1px;background:#b0b0b0"></div>
<div class="r" style="left:944px;top:353px;width:62px;height:4.5px;background:#fafafa;border:1px solid #ececec;box-sizing:border-box;"></div>
<div class="r" style="left:929px;top:354px;width:8px;height:1px;background:#888"></div>
<div class="r" style="left:945px;top:354px;width:19px;height:1px;background:#c8c8c8"></div>
<div class="r" style="left:923px;top:302px;width:89px;height:20px;background:#8bbd22;"></div>
<svg class="r" style="left:923px;top:322px;" width="5" height="5" viewBox="0 0 5 5"><path d="M0 0 H5 V5 Z" fill="#4d6b00"/></svg>
<div class="t" style="top:306px;font-size:12.5px;font-weight:normal;color:#fff;letter-spacing:-0.3px;left:667.5px;width:600px;text-align:center;">Adresse</div>
<div class="r" style="left:928px;top:396px;width:80px;height:79px;background:rgba(0,0,0,0.08);"></div>
<div class="r" style="left:928px;top:395px;width:79px;height:79px;background:#fff;"></div>
<div class="r" style="left:938px;top:422px;width:12px;height:1px;background:#b0b0b0"></div>
<div class="r" style="left:952px;top:421.5px;width:24px;height:3.0px;background:#f4f4f4;"></div>
<div class="r" style="left:938px;top:426px;width:6px;height:1px;background:#b0b0b0"></div>
<div class="r" style="left:938px;top:428px;width:59px;height:45px;background:#fff;border:1px solid #eeeeee;box-sizing:border-box;"></div>
<div class="r" style="left:938px;top:430.5px;width:59px;height:3.0px;background:#e6f0d6;"></div>
<div class="r" style="left:938px;top:434.5px;width:59px;height:2.5px;background:#f7f7f7;"></div>
<div class="r" style="left:938px;top:437.5px;width:59px;height:2.5px;background:#f7f7f7;"></div>
<div class="r" style="left:938px;top:440.5px;width:59px;height:2.5px;background:#f7f7f7;"></div>
<div class="r" style="left:944px;top:428px;width:1px;height:45px;background:#f6f6f6;"></div>
<div class="r" style="left:950px;top:428px;width:1px;height:45px;background:#f6f6f6;"></div>
<div class="r" style="left:958px;top:428px;width:1px;height:45px;background:#f6f6f6;"></div>
<div class="r" style="left:967px;top:428px;width:1px;height:45px;background:#f6f6f6;"></div>
<div class="r" style="left:977px;top:428px;width:1px;height:45px;background:#f6f6f6;"></div>
<div class="r" style="left:983px;top:428px;width:1px;height:45px;background:#f6f6f6;"></div>
<div class="r" style="left:991px;top:428px;width:1px;height:45px;background:#f6f6f6;"></div>
<div class="r" style="left:941px;top:428px;width:3px;height:1px;background:#d0d0d0"></div>
<div class="r" style="left:950px;top:428px;width:6px;height:1px;background:#d0d0d0"></div>
<div class="r" style="left:958px;top:428px;width:6px;height:1px;background:#d0d0d0"></div>
<div class="r" style="left:967px;top:428px;width:7px;height:1px;background:#d0d0d0"></div>
<div class="r" style="left:978px;top:428px;width:1px;height:1px;background:#d0d0d0"></div>
<div class="r" style="left:983px;top:428px;width:5px;height:1px;background:#d0d0d0"></div>
<div class="r" style="left:991px;top:428px;width:5px;height:1px;background:#d0d0d0"></div>
<div class="r" style="left:941px;top:430px;width:3px;height:1px;background:#b4b4b4"></div>
<div class="r" style="left:950px;top:430px;width:6px;height:1px;background:#b4b4b4"></div>
<div class="r" style="left:958px;top:430px;width:6px;height:1px;background:#b4b4b4"></div>
<div class="r" style="left:967px;top:430px;width:7px;height:1px;background:#b4b4b4"></div>
<div class="r" style="left:978px;top:430px;width:1px;height:1px;background:#b4b4b4"></div>
<div class="r" style="left:983px;top:430px;width:5px;height:1px;background:#b4b4b4"></div>
<div class="r" style="left:991px;top:430px;width:5px;height:1px;background:#b4b4b4"></div>
<div class="r" style="left:941px;top:434px;width:3px;height:1px;background:#b4b4b4"></div>
<div class="r" style="left:950px;top:434px;width:6px;height:1px;background:#b4b4b4"></div>
<div class="r" style="left:958px;top:434px;width:6px;height:1px;background:#b4b4b4"></div>
<div class="r" style="left:967px;top:434px;width:7px;height:1px;background:#b4b4b4"></div>
<div class="r" style="left:978px;top:434px;width:1px;height:1px;background:#b4b4b4"></div>
<div class="r" style="left:983px;top:434px;width:5px;height:1px;background:#b4b4b4"></div>
<div class="r" style="left:991px;top:434px;width:5px;height:1px;background:#b4b4b4"></div>
<div class="r" style="left:941px;top:436px;width:3px;height:1px;background:#b4b4b4"></div>
<div class="r" style="left:950px;top:436px;width:6px;height:1px;background:#b4b4b4"></div>
<div class="r" style="left:958px;top:436px;width:6px;height:1px;background:#b4b4b4"></div>
<div class="r" style="left:967px;top:436px;width:7px;height:1px;background:#b4b4b4"></div>
<div class="r" style="left:978px;top:436px;width:1px;height:1px;background:#b4b4b4"></div>
<div class="r" style="left:983px;top:436px;width:5px;height:1px;background:#b4b4b4"></div>
<div class="r" style="left:991px;top:436px;width:5px;height:1px;background:#b4b4b4"></div>
<div class="r" style="left:941px;top:440px;width:3px;height:1px;background:#b4b4b4"></div>
<div class="r" style="left:950px;top:440px;width:6px;height:1px;background:#b4b4b4"></div>
<div class="r" style="left:958px;top:440px;width:6px;height:1px;background:#b4b4b4"></div>
<div class="r" style="left:967px;top:440px;width:7px;height:1px;background:#b4b4b4"></div>
<div class="r" style="left:978px;top:440px;width:1px;height:1px;background:#b4b4b4"></div>
<div class="r" style="left:983px;top:440px;width:5px;height:1px;background:#b4b4b4"></div>
<div class="r" style="left:991px;top:440px;width:5px;height:1px;background:#b4b4b4"></div>
<div class="r" style="left:941px;top:472px;width:39px;height:1px;background:#c0c0c0"></div>
<div class="r" style="left:923px;top:402px;width:89px;height:20px;background:#8bbd22;"></div>
<svg class="r" style="left:923px;top:422px;" width="5" height="5" viewBox="0 0 5 5"><path d="M0 0 H5 V5 Z" fill="#4d6b00"/></svg>
<div class="t" style="top:406px;font-size:12.5px;font-weight:normal;color:#fff;letter-spacing:-0.3px;left:667.5px;width:600px;text-align:center;">Buchhaltung</div>
<div class="r" style="left:0px;top:752px;width:1022px;height:1px;background:#fff;"></div>
</body></html>
